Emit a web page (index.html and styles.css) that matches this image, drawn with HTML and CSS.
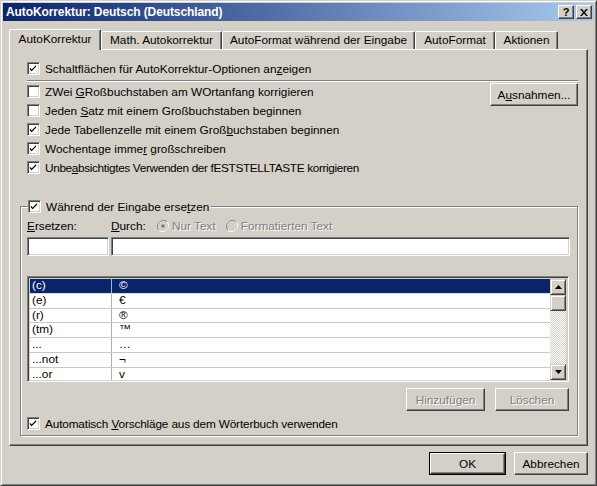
FILE: index.html
```html
<!DOCTYPE html>
<html>
<head>
<meta charset="utf-8">
<link rel="stylesheet" href="styles.css">
</head>
<body>
<div class="window">
  <div class="titlebar">
    <span class="title">AutoKorrektur: Deutsch (Deutschland)</span>
    <div class="tbtns">
      <span class="tbtn help">?</span>
      <span class="tbtn close"><svg width="8" height="7" viewBox="0 0 8 7"><path d="M0 0h2l2 2.5L6 0h2L5 3.5 8 7H6L4 4.5 2 7H0l3-3.5z" fill="#000"/></svg></span>
    </div>
  </div>

  <div class="tabs">
    <div class="tab active w1">AutoKorrektur</div>
    <div class="tab w2">Math. Autokorrektur</div>
    <div class="tab w3">AutoFormat während der Eingabe</div>
    <div class="tab w4">AutoFormat</div>
    <div class="tab w5">Aktionen</div>
  </div>

  <div class="panel">
    <div class="top">
      <div class="row"><span class="cb"><svg viewBox="0 0 9 9"><path d="M1 3.5l2 2 5-5v2l-5 5-2-2z" fill="#000"/></svg></span><span>Schaltflächen für AutoKorrektur-Optionen an<u>z</u>eigen</span></div>
      <div class="sep"></div>
      <div class="opts">
        <div class="optlist">
          <div class="row"><span class="cb"></span><span>ZWei <u>G</u>Roßbuchstaben am WOrtanfang korrigieren</span></div>
          <div class="row"><span class="cb"></span><span>Jeden <u>S</u>atz mit einem Großbuchstaben beginnen</span></div>
          <div class="row"><span class="cb"><svg viewBox="0 0 9 9"><path d="M1 3.5l2 2 5-5v2l-5 5-2-2z" fill="#000"/></svg></span><span>Jede Tabellenzelle mit einem Groß<u>b</u>uchstaben beginnen</span></div>
          <div class="row"><span class="cb"><svg viewBox="0 0 9 9"><path d="M1 3.5l2 2 5-5v2l-5 5-2-2z" fill="#000"/></svg></span><span>Wochentage imme<u>r</u> großschreiben</span></div>
          <div class="row"><span class="cb"><svg viewBox="0 0 9 9"><path d="M1 3.5l2 2 5-5v2l-5 5-2-2z" fill="#000"/></svg></span><span class="narrow">Unbe<u>a</u>bsichtigtes Verwenden der fESTSTELLTASTE korrigieren</span></div>
        </div>
        <div class="btn ausnahmen">A<u>u</u>snahmen...</div>
      </div>
    </div>

    <div class="group">
      <div class="glabel"><span class="cb"><svg viewBox="0 0 9 9"><path d="M1 3.5l2 2 5-5v2l-5 5-2-2z" fill="#000"/></svg></span><span>Während der Eingabe erse<u>t</u>zen</span></div>
      <div class="labels">
        <span class="lab1"><u>E</u>rsetzen:</span>
        <span class="lab2"><u>D</u>urch:</span>
        <span class="radio"><svg width="12" height="12" viewBox="0 0 12 12"><path d="M10.2 1.8A6 6 0 0 0 1.8 10.2" fill="none" stroke="#808080"/><path d="M1.8 10.2A6 6 0 0 0 10.2 1.8" fill="none" stroke="#fff"/><circle cx="6" cy="6" r="5" fill="#d4d0c8"/><circle cx="6" cy="6" r="1.8" fill="#808080"/></svg><span class="dis">Nur Text</span></span>
        <span class="radio r2"><svg width="12" height="12" viewBox="0 0 12 12"><path d="M10.2 1.8A6 6 0 0 0 1.8 10.2" fill="none" stroke="#808080"/><path d="M1.8 10.2A6 6 0 0 0 10.2 1.8" fill="none" stroke="#fff"/><circle cx="6" cy="6" r="5" fill="#d4d0c8"/></svg><span class="dis">Formatierten Text</span></span>
      </div>
      <div class="inputs">
        <div class="field f1"></div>
        <div class="field f2"></div>
      </div>
      <div class="list">
        <div class="rows">
          <div class="lrow sel"><span class="c1">(c)</span><span class="c2">©</span></div>
          <div class="lrow"><span class="c1">(e)</span><span class="c2">€</span></div>
          <div class="lrow"><span class="c1">(r)</span><span class="c2">®</span></div>
          <div class="lrow"><span class="c1">(tm)</span><span class="c2">™</span></div>
          <div class="lrow"><span class="c1">...</span><span class="c2">…</span></div>
          <div class="lrow"><span class="c1">...not</span><span class="c2">¬</span></div>
          <div class="lrow"><span class="c1">...or</span><span class="c2">v</span></div>
        </div>
        <div class="scroll">
          <div class="sbtn"><svg width="7" height="4" viewBox="0 0 7 4"><path d="M3.5 0L7 4H0z" fill="#000"/></svg></div>
          <div class="sthumb"></div>
          <div class="strack"></div>
          <div class="sbtn"><svg width="7" height="4" viewBox="0 0 7 4"><path d="M0 0h7L3.5 4z" fill="#000"/></svg></div>
        </div>
      </div>
      <div class="listbtns">
        <div class="btn hinz dis">Hinzufügen</div>
        <div class="btn losch dis">Löschen</div>
      </div>
      <div class="row auto"><span class="cb"><svg viewBox="0 0 9 9"><path d="M1 3.5l2 2 5-5v2l-5 5-2-2z" fill="#000"/></svg></span><span class="narrow2">Automatisch <u>V</u>orschläge aus dem Wörterbuch verwenden</span></div>
    </div>
  </div>

  <div class="footer">
    <div class="btn ok"><span>OK</span></div>
    <div class="btn cancel">Abbrechen</div>
  </div>
</div>
</body>
</html>
```

FILE: styles.css
```css
* { box-sizing: border-box; }
html, body { margin: 0; padding: 0; }
body {
  width: 597px;
  height: 486px;
  background: #d4d0c8;
  font-family: "Liberation Sans", Arial, sans-serif;
  font-size: 11.8px;
  color: #000;
  overflow: hidden;
}
u { text-decoration: underline; text-underline-offset: 1px; }

.window {
  width: 597px;
  height: 486px;
  background: #d4d0c8;
  border: 1px solid;
  border-color: #d4d0c8 #404040 #404040 #d4d0c8;
  box-shadow: inset 1px 1px 0 #fff, inset -1px -1px 0 #808080;
  padding: 2px;
}

.titlebar {
  height: 18px;
  background: linear-gradient(to right, #0a246a, #a6caf0);
  display: flex;
  align-items: center;
  justify-content: space-between;
  padding: 0 2px 0 3px;
}
.title {
  color: #fff;
  font-weight: bold;
  font-size: 12px;
  letter-spacing: -0.1px;
}
.tbtns { display: flex; gap: 2px; }
.tbtn {
  width: 16px;
  height: 14px;
  background: #d4d0c8;
  border: 1px solid;
  border-color: #fff #404040 #404040 #fff;
  box-shadow: inset -1px -1px 0 #808080;
  display: flex;
  align-items: center;
  justify-content: center;
  font-weight: bold;
  font-size: 11px;
  line-height: 1;
}

.tabs {
  margin-top: 8px;
  height: 20px;
  display: flex;
  align-items: flex-end;
  padding-left: 6px;
  position: relative;
  z-index: 2;
}
.tab {
  height: 18px;
  border: 1px solid;
  border-bottom: none;
  border-color: #fff #404040 transparent #fff;
  box-shadow: inset -1px 0 0 #808080;
  border-radius: 2px 2px 0 0;
  display: flex;
  align-items: center;
  justify-content: center;
  padding-bottom: 1px;
  background: #d4d0c8;
  white-space: nowrap;
}
.tab.active {
  height: 21px;
  margin-bottom: -1px;
  padding-bottom: 2px;
}
.w1 { width: 92px; }
.w2 { width: 121px; }
.w3 { width: 193px; }
.w4 { width: 80px; }
.w5 { width: 63px; }

.panel {
  margin: 0 6px;
  height: 397px;
  border: 1px solid;
  border-color: #fff #404040 #404040 #fff;
  box-shadow: inset -1px -1px 0 #808080;
  padding: 9px 9px 0 10px;
}

.top { padding-left: 7px; }
.row {
  height: 19px;
  display: flex;
  align-items: center;
  white-space: nowrap;
}
.narrow { letter-spacing: -0.35px; }
.narrow2 { letter-spacing: -0.15px; }
.cb {
  width: 13px;
  height: 13px;
  flex: none;
  background: #fff;
  border: 1px solid;
  border-color: #808080 #fff #fff #808080;
  box-shadow: inset 1px 1px 0 #404040, inset -1px -1px 0 #d4d0c8;
  margin-right: 5px;
  padding: 2px;
  display: inline-flex;
}
.cb svg { width: 9px; height: 9px; display: block; margin: -1px 0 0 -1px; }

.sep {
  margin-top: 2px;
  height: 2px;
  border-top: 1px solid #808080;
  border-bottom: 1px solid #fff;
}
.opts {
  display: flex;
  justify-content: space-between;
  align-items: flex-start;
}
.btn {
  height: 23px;
  background: #d4d0c8;
  border: 1px solid;
  border-color: #fff #404040 #404040 #fff;
  box-shadow: inset -1px -1px 0 #808080;
  display: flex;
  align-items: center;
  justify-content: center;
  white-space: nowrap;
}
.ausnahmen { width: 88px; margin-top: 1px; }

.group {
  margin-top: 29px;
  position: relative;
  border: 1px solid #808080;
  box-shadow: inset 1px 1px 0 #fff, 1px 1px 0 #fff;
  padding: 11px 7px 2px 6px;
}
.glabel {
  position: absolute;
  top: -8px;
  left: 7px;
  height: 15px;
  display: flex;
  align-items: center;
  background: #d4d0c8;
  padding-right: 2px;
}
.glabel .cb { margin-right: 5px; }

.labels {
  height: 15px;
  display: flex;
  align-items: center;
  white-space: nowrap;
}
.lab1 { width: 84px; }
.lab2 { width: 46px; }
.radio { display: flex; align-items: center; gap: 3px; }
.radio svg { display: block; }
.r2 { margin-left: 10px; }
.dis { color: #808080; text-shadow: 1px 1px 0 #fff; }

.inputs {
  margin-top: 4px;
  display: flex;
  gap: 2px;
}
.field {
  height: 19px;
  background: #fff;
  border: 1px solid;
  border-color: #808080 #fff #fff #808080;
  box-shadow: inset 1px 1px 0 #404040, inset -1px -1px 0 #d4d0c8;
}
.f1 { width: 82px; }
.f2 { flex: 1; }

.list {
  margin-top: 20px;
  width: 542px;
  height: 106px;
  border: 1px solid;
  border-color: #808080 #fff #fff #808080;
  box-shadow: inset 1px 1px 0 #404040, inset -1px -1px 0 #d4d0c8;
  padding: 2px 2px 1px 2px;
  display: flex;
  overflow: hidden;
}
.rows { flex: 1; overflow: hidden; background: #fff; }
.lrow {
  height: 14.8px;
  display: flex;
  border-bottom: 1px solid #c8c8c8;
  background: #fff;
  line-height: 13px;
}
.lrow.sel { background: #0a246a; color: #fff; border-bottom-color: #cfd8ea; }
.c1 {
  width: 82px;
  padding-left: 2px;
  border-right: 1px solid #b0b0b0;
}
.c2 { padding-left: 7px; flex: 1; }

.scroll {
  width: 16px;
  display: flex;
  flex-direction: column;
}
.sbtn, .sthumb {
  height: 16px;
  flex: none;
  background: #d4d0c8;
  border: 1px solid;
  border-color: #d4d0c8 #404040 #404040 #d4d0c8;
  box-shadow: inset 1px 1px 0 #fff, inset -1px -1px 0 #808080;
  display: flex;
  align-items: center;
  justify-content: center;
}
.sbtn svg { display: block; }
.strack {
  flex: 1;
  background: repeating-conic-gradient(#fff 0 25%, #d4d0c8 0 50%) 0 0 / 2px 2px;
}

.listbtns {
  margin-top: 6px;
  width: 542px;
  display: flex;
  justify-content: flex-end;
  gap: 10px;
}
.hinz { width: 79px; }
.losch { width: 74px; }

.auto { margin-top: 3px; }

.footer {
  margin: 6px 6px 0;
  display: flex;
  justify-content: flex-end;
  gap: 8px;
}
.ok {
  width: 77px;
  border: 1px solid #000;
  box-shadow: none;
  padding: 0;
}
.ok span {
  width: 100%;
  height: 100%;
  display: flex;
  align-items: center;
  justify-content: center;
  border: 1px solid;
  border-color: #fff #404040 #404040 #fff;
  box-shadow: inset -1px -1px 0 #808080;
}
.cancel { width: 74px; }
```
